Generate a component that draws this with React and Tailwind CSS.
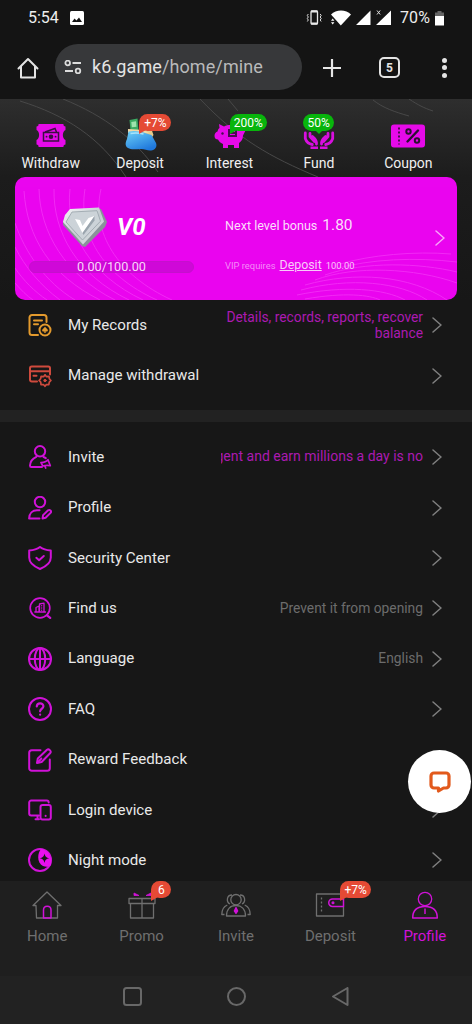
import clsx from "clsx";

const PINK = "#d012d8";

function Chevron({ className }) {
  return (
    <svg viewBox="0 0 10 16" className={clsx("h-4 w-[10px] shrink-0", className)} fill="none" stroke="currentColor" strokeWidth="1.5" strokeLinecap="round">
      <path d="M1 1l8 7-8 7" />
    </svg>
  );
}

function RowIcon({ children, color = PINK }) {
  return (
    <svg viewBox="0 0 24 24" className="size-6 shrink-0" fill="none" stroke={color} strokeWidth="2" strokeLinecap="round" strokeLinejoin="round">
      {children}
    </svg>
  );
}

const icons = {
  records: (
    <RowIcon color="#e39a2d">
      <path d="M18.500 9V4.500A2.500 2.500 0 0 0 16 2H4a2.500 2.500 0 0 0-2.500 2.500v15A2.500 2.500 0 0 0 4 22h6M6 7.500h8M6 11.300h4" />
      <circle cx="17" cy="17" r="5.500" />
      <path d="M17 13.700l2.800 3c.5 1.500-1 2.200-2.200 1.500l.4 1.500h-2l.4-1.500c-1.200.7-2.700 0-2.200-1.500z" fill="#e39a2d" stroke="none" />
    </RowIcon>
  ),
  manage: (
    <RowIcon color="#cf4a3d">
      <path d="M22 10.500V4.200A1.700 1.700 0 0 0 20.300 2.500H3.700A1.700 1.700 0 0 0 2 4.200v11.600a1.700 1.700 0 0 0 1.700 1.700H9M2 7.300h20" />
      <path d="M5.500 11.800h3" />
      <path d="M17 10.800l1.500 1.900 2.500-.3.400 2.400 1.500 1.700-1.600 1.700-.5 2.400-2.400-.1-1.400 1.800-1.600-1.800-2.400.1-.3-2.400-1.600-1.700 1.500-1.700.5-2.400 2.500.3z" strokeWidth="1.700" />
      <circle cx="17" cy="16.500" r="1.200" fill="#cf4a3d" strokeWidth="1" />
    </RowIcon>
  ),
  invite: (
    <RowIcon>
      <circle cx="12" cy="6.300" r="5.200" />
      <path d="M8.300 11.800C4.500 13.500 2.200 16.500 2 20.500c0 1 .5 1.500 1.300 1.500H14M15.500 12c1 .3 1.700.7 2.300 1.100" />
      <path d="M13 17.600c3-.2 5.500-1 7-2.900l2.300 6c-2.500-.7-5-.5-7.500.3zM16.800 21l.9 2" strokeWidth="1.700" />
    </RowIcon>
  ),
  profile: (
    <RowIcon>
      <circle cx="12" cy="6" r="5.200" />
      <path d="M11.500 14.200H9c-4.300 0-7.800 3-7.900 8.300h10.400" />
      <path d="M14.500 22.500l.6-3.400 5-4.800c1.800-1 3.600.6 2.700 2.300l-5.200 5.200z" />
    </RowIcon>
  ),
  security: (
    <RowIcon>
      <path d="M12 1c3 2.300 6.500 3.200 10.800 3.400v7.200c0 5.500-4.800 9-10.800 11.400C6 20.600 1.200 17.100 1.200 11.600V4.400C5.500 4.200 9 3.300 12 1z" />
      <path d="M8.300 11.800l2.800 2.500 4.700-4.300" />
    </RowIcon>
  ),
  find: (
    <RowIcon>
      <circle cx="12" cy="12" r="9.800" strokeWidth="1.700" />
      <path d="M19 19.300l3.200 2.600" strokeWidth="2.300" />
      <path d="M6.800 16h10.700M8 16v-4.500l3-1.500v6M11.500 16V8l4.500-.8V16M13.700 9.700v.1M13.700 12v.1M13.700 14.200v.1" strokeWidth="1.300" />
    </RowIcon>
  ),
  language: (
    <RowIcon>
      <circle cx="12" cy="12" r="11" />
      <ellipse cx="12" cy="12" rx="5.200" ry="11" />
      <path d="M1 12h22M12 1v22" />
    </RowIcon>
  ),
  faq: (
    <RowIcon>
      <circle cx="12" cy="12" r="11" />
      <path d="M8.800 9.500c.1-4.300 6.700-4.200 6.600-.2 0 2.500-3.300 2.400-3.300 5M12.100 17.500v.2" strokeWidth="2.200" />
    </RowIcon>
  ),
  feedback: (
    <RowIcon>
      <path d="M12.500 2.200H3.800A2.600 2.600 0 0 0 1.200 4.800v15.400a2.600 2.600 0 0 0 2.600 2.600h15.400a2.600 2.600 0 0 0 2.600-2.600v-8.700" />
      <path d="M9 15l.8-4.500L19 1.800c1.800-1.300 4.700 1.100 3.300 3.200l-8.700 9z" />
      <path d="M9.800 14.300l3.500-3.700" />
    </RowIcon>
  ),
  device: (
    <RowIcon>
      <path d="M11 17.500H3.200a2 2 0 0 1-2-2V4.500a2 2 0 0 1 2-2h15.500a2 2 0 0 1 2 2M7.500 21.300H11M9.500 17.700v3.500" />
      <rect x="12.500" y="7" width="10.300" height="14.500" rx="2" />
      <path d="M17.600 17.800v.1" />
    </RowIcon>
  ),
  night: (
    <RowIcon>
      <circle cx="12" cy="12" r="11" />
      <path d="M13 1C9 6 9 15 15 18c3 1.300 6 1 8-1 1.500-8-3-15-10-16z" fill="#e910ee" stroke="none" />
      <path d="M16.500 5.500c.7 3.100 1.700 4.100 4.800 4.800-3.100.7-4.100 1.700-4.800 4.800-.7-3.100-1.700-4.100-4.800-4.800 3.100-.7 4.100-1.700 4.800-4.800z" fill="#171717" stroke="none" />
    </RowIcon>
  ),
};

const menu = [
  { icon: "invite", label: "Invite", marquee: "gent and earn millions a day is no" },
  { icon: "profile", label: "Profile" },
  { icon: "security", label: "Security Center" },
  { icon: "find", label: "Find us", value: "Prevent it from opening" },
  { icon: "language", label: "Language", value: "English" },
  { icon: "faq", label: "FAQ" },
  { icon: "feedback", label: "Reward Feedback" },
  { icon: "device", label: "Login device" },
  { icon: "night", label: "Night mode" },
];

function Row({ icon, label, value, marquee, children }) {
  return (
    <div className="flex h-[50.4px] items-center pr-[30px] pl-7">
      {icons[icon]}
      <span className="ml-4 text-[15.1px] whitespace-nowrap text-[#e9e9e9]">{label}</span>
      <div className="ml-auto flex min-w-0 items-center gap-[9px]">
        {marquee && (
          <span className="mb-0.5 flex w-[202px] justify-end overflow-hidden text-[14px] whitespace-nowrap text-[#ab1ab1]">{marquee}</span>
        )}
        {value && <span className="text-[13.8px] text-[#6c6c6c]">{value}</span>}
        {children}
        <Chevron className="text-[#808080]" />
      </div>
    </div>
  );
}

function StatusBar() {
  return (
    <div className="flex h-9 items-center pr-7 pl-7 text-[16px] text-[#ededed]">
      <span>5:54</span>
      <svg viewBox="0 0 14 14" className="ml-[11px] size-[14px]">
        <rect width="14" height="14" rx="1.500" fill="#fff" />
        <path d="M2 11l2.500-3.500 2 2L9 6.500l3 4.500z" fill="#141414" />
      </svg>
      <svg viewBox="0 0 86 18" className="ml-auto h-[18px] w-[86px]" fill="#fff">
        <rect x="5" y="2" width="6.500" height="13" rx="1" fill="none" stroke="#e8e8e8" strokeWidth="1.300" />
        <path d="M5 2.500h6.500M5 14.500h6.500" stroke="#e8e8e8" strokeWidth="1.800" />
        <path d="M2.300 5l-1 1.500 1 1.500-1 1.500 1 1.500-1 1.500M14.200 5l1 1.500-1 1.500 1 1.500-1 1.500 1 1.500" fill="none" stroke="#ddd" strokeWidth="1" />
        <path d="M25 5.500c5-5.500 15-5.500 20 0L34.800 16.500z" />
        <path d="M25 11.800l1.700-2.300 1.700 2.300zM25 13.300l1.700 2.300 1.700-2.300z" />
        <path d="M50 16L64.500 1.500V16zM70 16L85 1.500V16z" />
        <path d="M71 1.500l3.200 4M74.200 1.500l-3.200 4" stroke="#ddd" />
      </svg>
      <span className="ml-2 tracking-[0.1px]">70%</span>
      <svg viewBox="0 0 9 16" className="ml-[5px] h-4 w-[9px]">
        <path d="M2.500 1h4v1.500H9V6H0V2.500h2.500z" fill="#666" />
        <path d="M0 6h9v9.500H0z" fill="#fff" />
      </svg>
    </div>
  );
}

function Toolbar() {
  return (
    <div className="flex h-[63px] items-center pb-1">
      <svg viewBox="0 0 22 22" className="mt-1 ml-[17px] size-[22px]" fill="none" stroke="#e4e4e4" strokeWidth="2" strokeLinejoin="round" strokeLinecap="round">
        <path d="M1.500 11.500L11 2l9.500 9.500M4 9.500v11h14v-11" />
      </svg>
      <div className="mt-0.5 ml-4 flex h-[46px] w-[247px] items-center rounded-full bg-[#37383a] pl-[9px]">
        <svg viewBox="0 0 18 14" className="h-[14px] w-[18px]" fill="none" stroke="#dcdcdc" strokeWidth="1.800">
          <circle cx="3.700" cy="3" r="2.300" />
          <path d="M8.500 3H17M1 11h8" />
          <circle cx="14" cy="11" r="2.300" />
        </svg>
        <span className="ml-[10px] text-[18px] tracking-[0.1px] text-[#b9babb]">
          <span className="text-[#e4e4e4]">k6.game</span>/home/mine
        </span>
      </div>
      <svg viewBox="0 0 18 18" className="mt-1 ml-[21px] size-[18px]" stroke="#e6e6e6" strokeWidth="2.200" strokeLinecap="round">
        <path d="M9 0.500v17M.5 9h17" />
      </svg>
      <div className="mt-1 ml-[38px] flex size-[21px] items-center justify-center rounded-[5px] border-2 border-[#e4e4e4] text-[12px] font-bold text-[#e4e4e4]">5</div>
      <div className="mt-1 ml-[42px] flex flex-col gap-[2.5px]">
        <i className="size-[5px] rounded-full bg-[#e4e4e4]" />
        <i className="size-[5px] rounded-full bg-[#e4e4e4]" />
        <i className="size-[5px] rounded-full bg-[#e4e4e4]" />
      </div>
    </div>
  );
}

// speech-bubble badge, tail bottom-left unless centred
function Badge({ children, className, color = "#e54a35", centered }) {
  return (
    <span className={clsx("absolute flex h-[17px] items-center justify-center rounded-full text-[12px] text-white", className)}>
      {children}
      <svg viewBox="0 0 8 12" className={clsx("absolute top-[9px] h-3 w-2", centered ? "left-[12px]" : "left-0")} fill={color}>
        <path d={centered ? "M0 7h8L4 11z" : "M0 0v11l7-4z"} />
      </svg>
    </span>
  );
}

const actions = [
  {
    label: "Withdraw",
    art: (
      <>
        <path d="M6.500 4h25a2 2 0 0 0 2 2.500v3.500c-3.500 1.500-3.500 8.500 0 10v4.500a2 2 0 0 0-2 2.500h-25a2 2 0 0 0-2-2.500V20c3.500-1.500 3.500-8.500 0-10V6.500a2 2 0 0 0 2-2.500z" fill="#e60ae9" />
        <path d="M11.500 12.500h15v8.500h-15zM13 12l10-3.500 1.500 3.500" fill="none" stroke="#3a1040" strokeWidth="1.500" />
        <circle cx="19" cy="16.700" r="2.300" fill="#3a1040" />
        <path d="M14.500 16.700h.1M23.500 16.700h.1" stroke="#3a1040" strokeWidth="1.800" strokeLinecap="round" />
      </>
    ),
  },
  {
    label: "Deposit",
    badge: <Badge className="top-[15px] left-[44px] w-8 bg-[#e54a35]">+7%</Badge>,
    art: (
      <>
        <defs>
          <linearGradient id="purse" x1="0" y1="0" x2="0.6" y2="1">
            <stop offset="0" stopColor="#6ed2f7" />
            <stop offset="1" stopColor="#1f78dc" />
          </linearGradient>
        </defs>
        <path d="M8.500 0l8-1.500 1 12h-8z" fill="#3cab63" />
        <path d="M10.300 2l4.700-.8.5 5.500-4.700.6z" fill="#9ee3ad" />
        <path d="M19 6l10-1 3.500 10-2 3-11-6z" fill="#e8ca8a" />
        <path d="M7 9l16 1 5 3H7z" fill="#f2d9a5" />
        <path d="M7.500 11.500c6-1.500 13 0 18 2l5 1.500 4.500 8c1.500 4-1 7-5 7.500-3 .5-6-1.500-10-1.500-5 0-10 1-13-1-3.500-2-2.500-6-1-9z" fill="url(#purse)" />
        <path d="M9.500 13.500c4-.7 8-.7 13 .5" stroke="#a8e4fb" strokeWidth="1.500" fill="none" />
      </>
    ),
  },
  {
    label: "Interest",
    badge: <Badge color="#08b50c" className="top-[15px] left-[45px] w-[37px] bg-[#08b50c]">200%</Badge>,
    art: (
      <>
        <path d="M8 4l5 2.500c4-2 11-2 14.500.5 3 0 6 0 7.500 2.500l-3 6c0 4-2 6-4 7.500V28h-5v-3h-6v3h-5v-4c-3-1-4-3-5-4.500-2 0-3.500-1-3.500-3.500s1.500-4 3-4.500C7 9.500 7.500 8.500 8.500 8z" fill="#e60ae9" />
        <path d="M17 9h9v8h-9z" fill="#4a0c50" />
        <path d="M19 11.500h5M19 14.500h5" stroke="#e60ae9" strokeWidth="1.200" />
        <circle cx="11.500" cy="13.500" r="1.200" fill="#4a0c50" />
      </>
    ),
  },
  {
    label: "Fund",
    badge: <Badge centered color="#08b50c" className="top-[15px] left-[29px] w-[31px] bg-[#08b50c]">50%</Badge>,
    art: (
      <>
        <g fill="none" stroke="#d80fdf" strokeWidth="2.800" strokeLinecap="round" strokeLinejoin="round">
          <path d="M5.300 13v5.500c1 3 4 5.500 7 6M10 13.500v3l4.500 5M16.500 24c.3-3.500-1-5-4-7.500" />
          <path d="M32.700 13v5.500c-1 3-4 5.500-7 6M28 13.500v3l-4.500 5M21.500 24c-.3-3.500 1-5 4-7.500" />
        </g>
        <path d="M10.500 27.800h7.500M20 27.800h7.500" stroke="#d80fdf" strokeWidth="2.400" />
      </>
    ),
  },
  {
    label: "Coupon",
    art: (
      <>
        <rect x="2" y="4.500" width="34" height="23" rx="3" fill="#e60ae9" />
        <path d="M10 7.500v17" stroke="#4a0c50" strokeWidth="2" strokeDasharray="2 2" />
        <path d="M18.500 21.500L29 10.500" stroke="#2a1030" strokeWidth="2.400" strokeLinecap="round" />
        <circle cx="19.500" cy="11.500" r="2.200" fill="none" stroke="#2a1030" strokeWidth="2" />
        <circle cx="28" cy="20.500" r="2.200" fill="none" stroke="#2a1030" strokeWidth="2" />
      </>
    ),
  },
];

function Actions() {
  return (
    <div className="relative flex h-[78px] bg-gradient-to-b from-[#2e2e2e] to-[#1c1c1c] pr-[19px] pl-[6px]">
      <svg viewBox="0 0 472 78" className="absolute inset-0 h-[78px] w-[472px]" fill="none" stroke="#484848" strokeWidth="1">
        <path d="M20 2C65 16 100 38 126 78M63 0C105 17 135 40 158 73M200 0C238 40 270 58 318 78M228 0l10 12M373 1c10 8 22 12 36 16M409 0c9 6 15 9 24 12" />
      </svg>
      {actions.map((a) => (
        <div key={a.label} className="relative flex flex-1 flex-col items-center pt-[21px]">
          <svg viewBox="0 0 38 32" className="h-8 w-[38px] overflow-visible">{a.art}</svg>
          <span className="mt-0.5 text-[14px] leading-[18px] text-[#f0f0f0]">{a.label}</span>
          {a.badge}
        </div>
      ))}
    </div>
  );
}

function LevelCard() {
  return (
    <div className="bg-gradient-to-b from-[#1c1c1c] to-[#171717]">
      <div className="relative mx-[15px] flex h-[123px] overflow-hidden rounded-[10px] bg-[#ea05ef]">
        <svg viewBox="0 0 442 123" className="absolute inset-0 h-[123px] w-[442px]" fill="none" stroke="#fb55fb" strokeWidth="1" opacity="0.45">
          <path d="M9 14C12 60 35 98 85 123M24 12C25 55 50 98 100 123M39 12C38 55 62 98 114 123M55 12C50 55 75 98 128 123M70 12C63 55 86 98 142 123M86 12C76 55 102 98 157 123" />
          <path d="M0 46C10 75 30 105 60 123M0 70C10 90 25 108 45 123M0 91C8 103 20 115 32 123M0 106C6 113 12 119 18 123" />
          <path d="M325 87C355 78 400 74 436 77M320 92C355 82 400 80 442 85M310 98C350 84 405 86 442 95M300 103C340 88 400 91 442 106M290 108C340 94 395 98 432 123M286 113C335 100 385 105 412 123M282 118C330 108 370 112 390 123M290 122C330 115 355 118 365 123" />
        </svg>
        <div className="relative ml-[14px] w-[165px] pt-[29px]">
          <div className="flex h-[42px] items-center pl-[33px]">
            <svg viewBox="0 0 46 42" className="h-[42px] w-[46px]">
              <defs>
                <linearGradient id="silver" x1="0" y1="0" x2="1" y2="1">
                  <stop offset="0" stopColor="#f5f6f7" />
                  <stop offset="0.55" stopColor="#c3cacf" />
                  <stop offset="1" stopColor="#e6e9eb" />
                </linearGradient>
              </defs>
              <path d="M9 4L39 3l6 13-2 5-20 20-3-1L1 19V15z" fill="#8a929a" />
              <path d="M3 9l5-6 29-1.500 5 14L21 38.500 1 16z" fill="url(#silver)" />
              <path d="M10 6l25-1.300 3.500 10.500L20.500 34 4 16z" fill="#ccd3d8" stroke="#98a2aa" strokeWidth="0.800" />
              <path d="M13 13l5 1 2.500 6 6-8 6-2-12 17z" fill="#fff" />
              <path d="M20.500 27L32.500 10v4.500L21.500 29z" fill="#9aa4ad" />
            </svg>
            <span className="ml-[9px] text-[24px] leading-none font-bold text-white italic">V0</span>
          </div>
          <div className="mt-[13px] flex h-3 items-center justify-center rounded-full border border-[#c510cd] bg-[#cf08d8] text-[12.7px] leading-none text-[#f9d8fa]">
            0.00/100.00
          </div>
        </div>
        <div className="relative ml-[31px] pt-[37px] whitespace-nowrap">
          <div className="flex h-6 items-baseline gap-[5px] text-[#fbdcfb]">
            <span className="text-[12.6px]">Next level bonus</span>
            <span className="text-[15.5px]">1.80</span>
          </div>
          <div className="mt-[18px] flex h-5 items-baseline text-[#f9c9fa]">
            <span className="text-[9.4px] text-[#f58bf8]">VIP requires</span>
            <span className="ml-1 text-[12.4px] underline">Deposit</span>
            <span className="ml-1 text-[9.4px]">100.00</span>
          </div>
        </div>
        <Chevron className="mt-[53px] mr-[12px] ml-auto text-[#f9a5fa]" />
      </div>
    </div>
  );
}

const tabs = [
  {
    label: "Home",
    art: (
      <>
        <path d="M4 14.500H1L15 1l14 13.500h-3.500V27h-21z" />
        <path d="M11.500 27v-8c0-5 7.500-5 7.500 0v8z" stroke={PINK} strokeWidth="1.500" />
      </>
    ),
  },
  {
    label: "Promo",
    badge: <Badge className="top-0 left-[57px] w-5 bg-[#e54a35]">6</Badge>,
    art: (
      <>
        <path d="M2 7.500h26v5H2zM3.500 12.500h23V27h-23zM15 7.500V27" />
        <path d="M7 2l5 2.500H7zM24 2l-5 2.500h5z" fill={PINK} stroke={PINK} strokeWidth="0.800" />
      </>
    ),
  },
  {
    label: "Invite",
    art: (
      <>
        <circle cx="15" cy="8.700" r="5.200" />
        <path d="M5.500 25c0-7 4-10.500 9.500-10.500S24.500 18 24.500 25zM9 13C5 11 5.500 4 11 4M21 13c4-2 3.500-9-2-9M3.500 23.500H.8c0-5 2-8 5.500-9.500M26.500 23.500h2.700c0-5-2-8-5.500-9.500" />
        <path d="M15 16.500l1.700 3.500-1.700 2.500-1.700-2.500z" fill={PINK} stroke={PINK} />
      </>
    ),
  },
  {
    label: "Deposit",
    badge: <Badge className="top-0 left-[57px] w-[31px] bg-[#e54a35]">+7%</Badge>,
    art: (
      <>
        <path d="M28.500 15.500V25h-27V3h27v5" />
        <path d="M6.500 6.500v15" strokeDasharray="2 2" />
        <path d="M28.500 8H17.500a3.700 3.700 0 0 0 0 7.500h11z" stroke={PINK} strokeWidth="1.500" />
        <circle cx="18" cy="11.800" r="0.900" fill={PINK} stroke={PINK} />
      </>
    ),
  },
  {
    label: "Profile",
    active: true,
    art: (
      <>
        <circle cx="15" cy="8" r="6.700" />
        <path d="M2.700 27c0-8 5-11.500 12.300-11.500S27.300 19 27.300 27zM15 17.500V23" strokeWidth="1.500" />
      </>
    ),
  },
];

function TabBar() {
  return (
    <div className="relative flex h-[95px] bg-[#1f1f1f]">
      {tabs.map((t) => (
        <div key={t.label} className={clsx("relative flex flex-1 flex-col items-center pt-[10px]", t.active ? "text-[#d012d8]" : "text-[#6f6f6f]")}>
          <svg viewBox="0 0 30 29" className="h-[29px] w-[30px]" fill="none" stroke="currentColor" strokeWidth="1.300" strokeLinejoin="round">{t.art}</svg>
          <span className="mt-[6px] text-[15px] leading-5">{t.label}</span>
          {t.badge}
        </div>
      ))}
    </div>
  );
}

export default function App() {
  return (
    <div className="relative flex h-[1024px] w-[472px] flex-col overflow-hidden bg-[#171717] font-['Roboto',sans-serif]">
      <div className="h-[99px] shrink-0 bg-[#141414]">
        <StatusBar />
        <Toolbar />
      </div>
      <main className="h-[782px] shrink-0 overflow-hidden">
        <Actions />
        <LevelCard />
        <div className="h-[110px]">
          <Row icon="records" label="My Records">
            <span className="w-[205px] text-right text-[13.8px] leading-4 text-[#ab1ab1]">Details, records, reports, recover balance</span>
          </Row>
          <Row icon="manage" label="Manage withdrawal" />
        </div>
        <div className="h-3 bg-[#222]" />
        <div className="pt-[10px]">
          {menu.map((item) => (
            <Row key={item.icon} {...item} />
          ))}
        </div>
      </main>
      <TabBar />
      <div className="flex h-12 shrink-0 items-center justify-center gap-[85px] bg-[#222] pb-[7px]">
        <svg viewBox="0 0 19 19" className="size-[19px]" fill="none" stroke="#686868" strokeWidth="2">
          <rect x="1" y="1" width="17" height="17" rx="2.500" />
        </svg>
        <svg viewBox="0 0 19 19" className="size-[19px]" fill="none" stroke="#686868" strokeWidth="2">
          <circle cx="9.500" cy="9.500" r="8.500" />
        </svg>
        <svg viewBox="0 0 19 19" className="size-[19px]" fill="none" stroke="#686868" strokeWidth="2" strokeLinejoin="round">
          <path d="M16.500 1v17L2 9.500z" />
        </svg>
      </div>
      <div className="absolute top-[750px] left-[408px] flex size-[63px] items-center justify-center rounded-full bg-white">
        <svg viewBox="0 0 22 22" className="size-[22px]" fill="none" stroke="#e2591c" strokeWidth="3.200" strokeLinejoin="round">
          <path d="M8.500 17H5a3 3 0 0 1-3-3V5a3 3 0 0 1 3-3h12a3 3 0 0 1 3 3v9a3 3 0 0 1-3 3h-2.500L9.500 20v-3z" />
        </svg>
      </div>
    </div>
  );
}
